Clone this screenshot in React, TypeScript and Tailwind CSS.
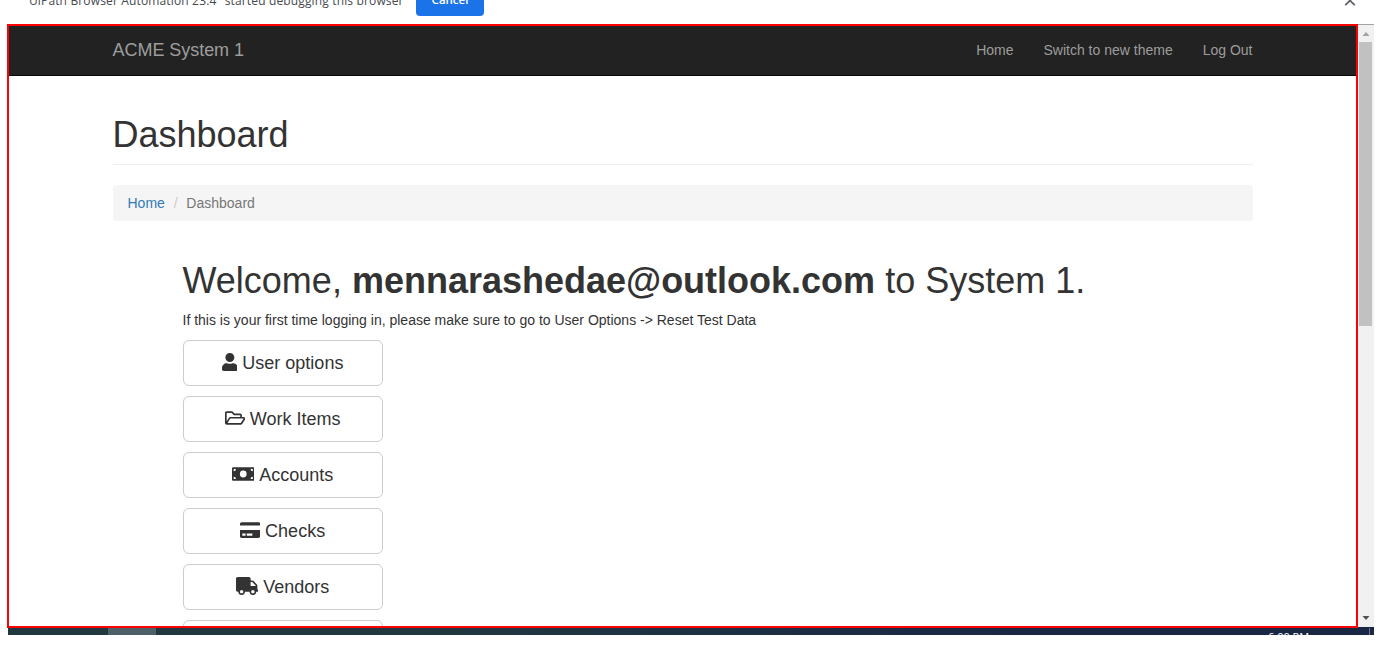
import type { ReactNode } from "react";
import { FaUser, FaRegFolderOpen, FaCreditCard, FaTruck } from "react-icons/fa";

function MoneyBill() {
  return (
    <svg className="-mt-[2px] h-[18px] w-[22.5px]" viewBox="0 0 640 512" fill="currentColor" fillRule="evenodd">
      <path d="M32 64H608A32 32 0 0 1 640 96V416A32 32 0 0 1 608 448H32A32 32 0 0 1 0 416V96A32 32 0 0 1 32 64zM48 400H112A64 64 0 0 0 48 336zM48 176A64 64 0 0 0 112 112H48zM320 158A96 98 0 0 0 320 354A96 98 0 0 0 320 158zM592 400V336A64 64 0 0 0 528 400zM592 176V112H528A64 64 0 0 0 592 176z" />
    </svg>
  );
}

const items: { label: string; icon: ReactNode }[] = [
  { label: "User options", icon: <FaUser className="-mt-[2px] h-[18px] w-[15.75px]" /> },
  { label: "Work Items", icon: <FaRegFolderOpen className="-mt-[2px] h-[18px] w-[20.25px]" /> },
  { label: "Accounts", icon: <MoneyBill /> },
  { label: "Checks", icon: <FaCreditCard className="-mt-[2px] h-[18px] w-[20.25px]" /> },
  { label: "Vendors", icon: <FaTruck className="-mt-[2px] h-[18px] w-[22.5px]" /> },
];

function InfoBar() {
  return (
    <div className="flex h-6 items-start overflow-hidden font-['Open_Sans','Noto_Sans',sans-serif]">
      <span className="-mt-[8px] ml-[24px] w-[392px] shrink-0 whitespace-nowrap text-[12px] leading-[18px] tracking-[0.15px] text-[#45494d]">
        "UiPath Browser Automation 23.4" started debugging this browser
      </span>
      <div className="-mt-4 h-8 w-[68px] shrink-0 rounded-[4px] bg-[#1a73e8] text-center text-[11.5px] font-semibold leading-[32px] text-white">
        Cancel
      </div>
      <svg className="-mt-[5px] ml-[860px] shrink-0" width="12" height="12" viewBox="0 0 12 12" stroke="#5f6368" strokeWidth="1.8">
        <path d="M1.2 1L10.8 10.2M10.8 1L1.2 10.2" />
      </svg>
    </div>
  );
}

function Navbar() {
  return (
    <nav className="flex h-[50px] items-center justify-between border-b border-[#080808] bg-[#222] pb-[2px] pl-[103.5px] pr-[103.5px] text-[14px] text-[#9d9d9d]">
      <span className="text-[18px] leading-5 tracking-[-0.04px]">ACME System 1</span>
      <div className="flex gap-[30px] leading-5">
        <span>Home</span>
        <span>Switch to new theme</span>
        <span>Log Out</span>
      </div>
    </nav>
  );
}

function Scrollbar() {
  return (
    <div className="flex h-[604px] w-4 shrink-0 flex-col items-center border-b border-t border-b-[#1a2744] border-t-[#a3a3a3] bg-[#f1f1f1]">
      <div className="flex h-[17px] items-center">
        <svg width="8" height="4" viewBox="0 0 8 4" fill="#a3a3a3"><path d="M0.5 4L4 0L7.5 4z" /></svg>
      </div>
      <div className="mr-px h-[284px] w-[13px] bg-[#c1c1c1]" />
      <div className="mt-auto flex h-[19px] items-center">
        <svg width="8" height="4" viewBox="0 0 8 4" fill="#505050"><path d="M0.5 0L4 4L7.5 0z" /></svg>
      </div>
    </div>
  );
}

export default function App() {
  return (
    <div className="h-[652px] w-[1382px] overflow-hidden bg-white font-['Liberation_Sans',Arial,sans-serif] text-[14px] leading-5 text-[#333]">
      <InfoBar />
      <div className="ml-[7px] flex">
        <div className="h-[604px] w-[1351px] shrink-0 overflow-hidden border-2 border-[#ff0000]">
          <Navbar />
          <main className="ml-[103.5px] w-[1140px]">
            <h1 className="border-b border-[#eee] pb-[9px] pt-[39px] text-[36px] leading-[40px]">Dashboard</h1>
            <div className="mt-5 flex h-9 items-center rounded-[4px] bg-[#f5f5f5] px-[15px]">
              <span className="text-[#337ab7]">Home</span>
              <span className="w-[21.5px] text-center text-[#ccc]">/</span>
              <span className="text-[#777]">Dashboard</span>
            </div>
            <section className="ml-[70px] pt-[40px]">
              <h2 className="whitespace-nowrap text-[36px] leading-[40px]">
                Welcome, <strong className="font-bold">mennarashedae@outlook.com</strong> to System 1.
              </h2>
              <p className="mt-[9px]">If this is your first time logging in, please make sure to go to User Options -&gt; Reset Test Data</p>
              <div className="mt-[10px] flex flex-col gap-[10px]">
                {items.map((item) => (
                  <button key={item.label} className="flex h-[46px] w-[200px] items-center justify-center gap-[5px] rounded-[6px] border border-[#ccc] text-[18px] leading-6">
                    {item.icon}
                    <span>{item.label}</span>
                  </button>
                ))}
                <div className="h-[46px] w-[200px] rounded-[6px] border border-[#ccc]" />
              </div>
            </section>
          </main>
        </div>
        <Scrollbar />
      </div>
      <div className="ml-2 flex h-[7px] w-[1366px] overflow-hidden bg-linear-to-r from-[#213840] from-30% to-[#1a2744] to-75%">
        <div className="ml-[100px] h-full w-12 bg-[#4d6067]" />
        <span className="ml-[1112px] mt-[2px] whitespace-nowrap font-['Open_Sans',sans-serif] text-[11px] leading-[14px] text-white">6:00 PM</span>
        <div className="ml-auto mr-1 h-full w-px bg-[#6d7587]" />
      </div>
    </div>
  );
}
